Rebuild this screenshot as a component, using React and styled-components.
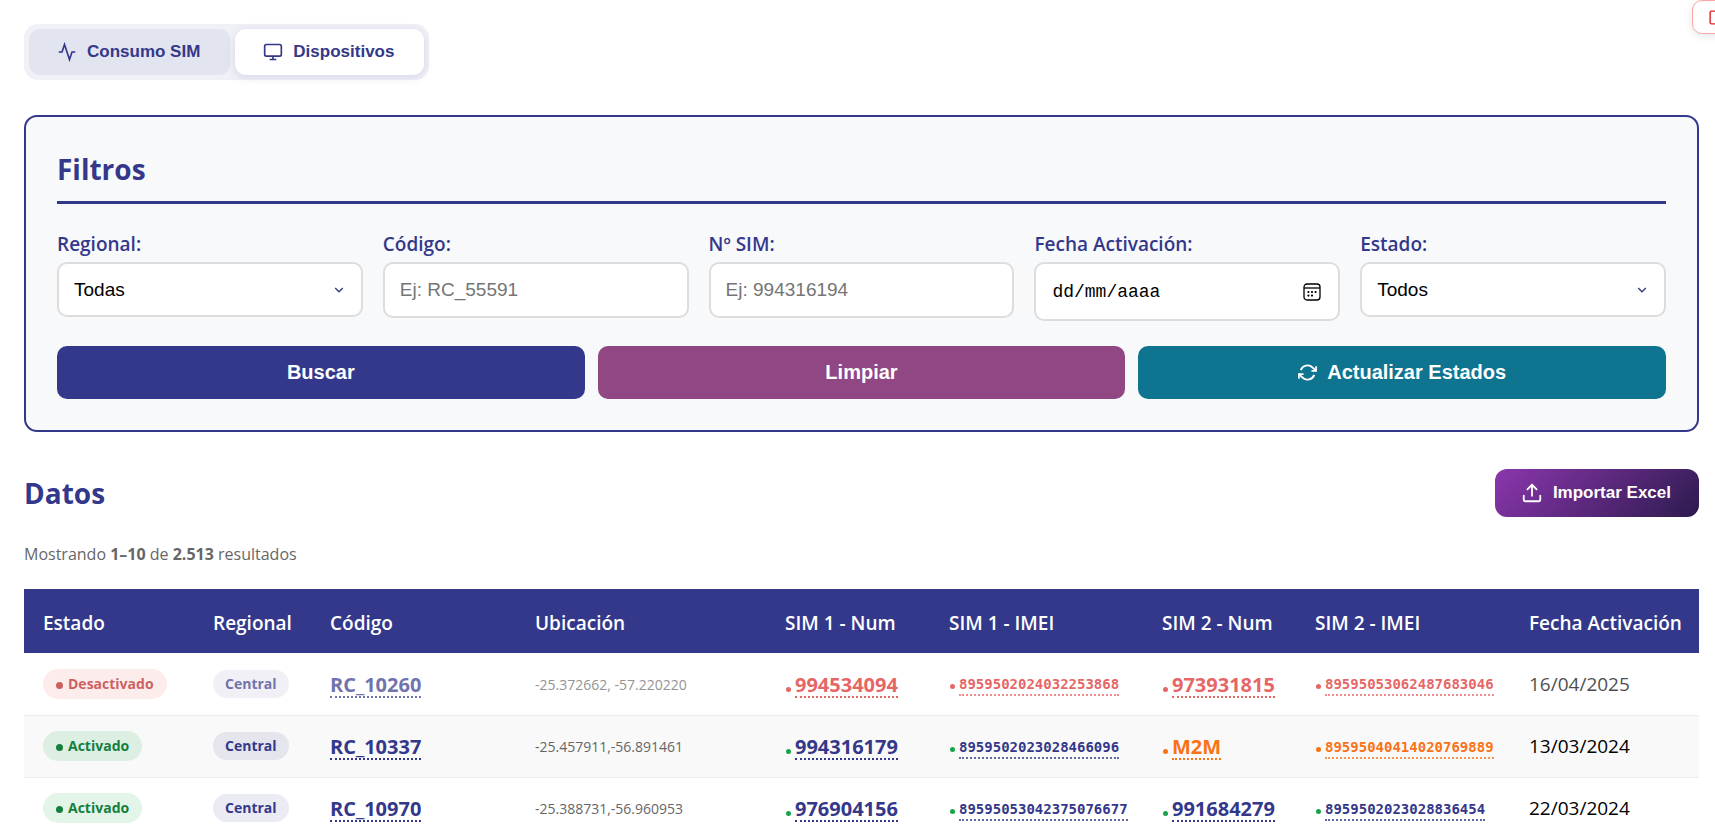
import React, { useState } from 'react'
import styled, { createGlobalStyle } from 'styled-components'
import { Upload } from 'lucide-react'

const GlobalStyle = createGlobalStyle`
  * {
    box-sizing: border-box;
  }

  body {
    margin: 0;
    background: #fff;
    color: #000;
    font-family: 'Open Sans', 'Noto Sans', sans-serif;
    overflow-x: hidden;
  }

  button, input, select {
    font-family: 'Liberation Sans', Arial, sans-serif;
  }
`;

const Page = styled.main`
  padding: 24px 16px 0 24px;
`;

const LogoutButton = styled.button`
  position: fixed;
  top: 0;
  right: -26px;
  display: flex;
  align-items: center;
  height: 34px;
  padding: 0 15px;
  background: #fff;
  border: 1px solid #fca5a5;
  border-radius: 10px;
  color: #dc2626;
  box-shadow: 0 2px 8px rgba(0, 0, 0, 0.1);
  cursor: pointer;
`;

const Tabs = styled.div`
  display: inline-flex;
  gap: 5px;
  padding: 5px;
  background: #f0f1f7;
  border-radius: 14px;
  vertical-align: top;
`;

const Tab = styled.button`
  display: flex;
  align-items: center;
  gap: 10px;
  height: 46px;
  padding: 0 30px 0 28px;
  border: none;
  border-radius: 11px;
  background: ${({ $active }) => ($active ? '#fff' : '#e2e4ef')};
  box-shadow: ${({ $active }) => ($active ? '0 2px 10px rgba(52, 56, 138, 0.15)' : 'none')};
  color: #34388a;
  font-size: 17px;
  font-weight: 700;
  cursor: pointer;
`;

const Panel = styled.section`
  margin-top: 35px;
  padding: 31px;
  background: #f8f9fb;
  border: 2px solid #34388a;
  border-radius: 13px;
`;

const Title = styled.h2`
  margin: 0;
  color: #34388a;
  font-size: 28px;
  font-weight: 700;
  line-height: 42px;
`;

const PanelTitle = styled(Title)`
  margin-bottom: 26px;
  padding-bottom: 11px;
  border-bottom: 3px solid #34388a;
`;

const Fields = styled.div`
  display: grid;
  grid-template-columns: repeat(5, 1fr);
  align-items: start;
  gap: 20px;
`;

const Field = styled.div`
  display: flex;
  flex-direction: column;
  gap: 4px;
`;

const Label = styled.label`
  color: #34388a;
  font-size: 19px;
  font-weight: 600;
  line-height: 28px;
`;

const Control = styled.input`
  width: 100%;
  height: 56px;
  padding: 0 15px;
  background: #fff;
  border: 2px solid #ddd;
  border-radius: 10px;
  color: #000;
  font-size: 19px;

  &::placeholder {
    color: #757575;
    opacity: 1;
  }
`;

const SelectBox = styled.div`
  position: relative;

  svg {
    position: absolute;
    top: 50%;
    right: 19px;
    transform: translateY(-50%);
    pointer-events: none;
  }
`;

const Select = styled(Control)`
  display: block;
  height: 55px;
  appearance: none;
`;

const DateBox = styled.div`
  position: relative;
`;

const DateInput = styled(Control)`
  display: block;
  height: 59px;
  padding: 0 16px;
  font-family: 'Liberation Mono', monospace;
  font-size: 18px;

  &::placeholder {
    color: #000;
  }
`;

const CalendarButton = styled.button`
  position: absolute;
  top: 0;
  right: 19px;
  bottom: 0;
  display: flex;
  align-items: center;
  padding: 0;
  border: none;
  background: none;
  color: #000;
`;

const Actions = styled.div`
  display: grid;
  grid-template-columns: repeat(3, 1fr);
  gap: 13px;
  margin-top: 25px;
`;

const actionColors = {
  search: '#34388a',
  clear: '#914784',
  refresh: '#0e7490',
}

const ActionButton = styled.button`
  display: flex;
  align-items: center;
  justify-content: center;
  gap: 10px;
  height: 53px;
  border: none;
  border-radius: 10px;
  background: ${({ $kind }) => actionColors[$kind]};
  color: #fff;
  font-size: 20px;
  font-weight: 700;
  cursor: pointer;
`;

const DataHeader = styled.header`
  display: flex;
  align-items: center;
  justify-content: space-between;
  margin-top: 37px;
`;

const ImportButton = styled.button`
  display: flex;
  align-items: center;
  gap: 10px;
  height: 48px;
  padding: 0 28px 0 26px;
  border: none;
  border-radius: 12px;
  background: linear-gradient(135deg, #8b36ad 0%, #2d1b4e 100%);
  color: #fff;
  font-size: 17px;
  font-weight: 700;
  cursor: pointer;
`;

const Summary = styled.p`
  margin: 25px 0 22px;
  color: #666;
  font-size: 16px;
  line-height: 25px;
`;

const Table = styled.table`
  width: 100%;
  table-layout: fixed;
  border-collapse: collapse;
`;

const Col = styled.col`
  width: ${({ $width }) => $width}px;
`;

const Th = styled.th`
  height: 64px;
  padding: 4px 0 0 19px;
  background: #34388a;
  color: #fff;
  font-size: 19px;
  font-weight: 600;
  text-align: left;
  white-space: nowrap;
`;

const Row = styled.tr`
  opacity: ${({ $inactive }) => ($inactive ? 0.7 : 1)};

  &:nth-child(even) {
    background: #f9f9f9;
  }
`;

const Td = styled.td`
  height: 62px;
  padding: 0 0 0 19px;
  border-bottom: 1px solid #ececec;
  font-size: 19px;
  line-height: 26px;
  white-space: nowrap;
`;

const Coordinates = styled.span`
  color: #666;
  font-size: 14px;
`;

const Dot = styled.span`
  display: inline-block;
  flex: none;
  width: ${({ $size }) => $size}px;
  height: ${({ $size }) => $size}px;
  border-radius: 50%;
  background: currentColor;
`;

const StatusBadge = styled.span`
  display: inline-flex;
  align-items: baseline;
  gap: 5px;
  height: 30px;
  padding: 0 13px;
  border-radius: 15px;
  background: ${({ $on }) => ($on ? 'rgba(22, 163, 74, 0.12)' : 'rgba(220, 38, 38, 0.12)')};
  color: ${({ $on }) => ($on ? '#15803d' : '#b91c1c')};
  font-size: 14px;
  font-weight: 700;
  line-height: 30px;
  vertical-align: middle;
`;

const RegionBadge = styled.span`
  display: inline-block;
  padding: 0 12px;
  border-radius: 14px;
  background: rgba(52, 56, 138, 0.1);
  color: #34388a;
  font-size: 14px;
  font-weight: 700;
  line-height: 28px;
  vertical-align: middle;
`;

const SimCell = styled.span`
  display: inline-flex;
  align-items: baseline;
  gap: 4px;
  padding-left: 1px;
  color: ${({ $color }) => $color};
`;

const ValueLink = styled.a`
  display: inline-block;
  padding-top: 4px;
  border-bottom: 2px dotted;
  color: ${({ $color }) => $color};
  font-size: 20px;
  font-weight: 700;
  line-height: 22px;
  text-decoration: none;
`;

const ImeiLink = styled(ValueLink)`
  margin-bottom: 2px;
  padding-top: 0;
  border-bottom-color: color-mix(in srgb, currentColor 75%, transparent);
  font-family: 'DejaVu Sans Mono', monospace;
  font-size: 14px;
  line-height: 20px;
`;

const tones = {
  ok: { dot: '#16a34a', text: '#34388a' },
  off: { dot: '#dc2626', text: '#dc2626' },
  m2m: { dot: '#f97316', text: '#f97316' },
}

const columns = [
  { title: 'Estado', width: 170 },
  { title: 'Regional', width: 117 },
  { title: 'Código', width: 205 },
  { title: 'Ubicación', width: 250 },
  { title: 'SIM 1 - Num', width: 164 },
  { title: 'SIM 1 - IMEI', width: 213 },
  { title: 'SIM 2 - Num', width: 153 },
  { title: 'SIM 2 - IMEI', width: 214 },
  { title: 'Fecha Activación', width: 189 },
]

const devices = [
  {
    active: false,
    region: 'Central',
    code: 'RC_10260',
    location: '-25.372662, -57.220220',
    sims: [
      { tone: 'off', num: '994534094', imei: '8959502024032253868' },
      { tone: 'off', num: '973931815', imei: '89595053062487683046' },
    ],
    date: '16/04/2025',
  },
  {
    active: true,
    region: 'Central',
    code: 'RC_10337',
    location: '-25.457911,-56.891461',
    sims: [
      { tone: 'ok', num: '994316179', imei: '8959502023028466096' },
      { tone: 'm2m', num: 'M2M', imei: '89595040414020769889' },
    ],
    date: '13/03/2024',
  },
  {
    active: true,
    region: 'Central',
    code: 'RC_10970',
    location: '-25.388731,-56.960953',
    sims: [
      { tone: 'ok', num: '976904156', imei: '89595053042375076677' },
      { tone: 'ok', num: '991684279', imei: '8959502023028836454' },
    ],
    date: '22/03/2024',
  },
]

const LogoutIcon = () => (
  <svg width="17" height="17" viewBox="0 0 24 24" fill="none" stroke="currentColor" strokeWidth="2" aria-hidden="true">
    <path d="M10 21H5a2 2 0 0 1-2-2V5a2 2 0 0 1 2-2h5" />
    <path d="M16 17l5-5-5-5M21 12H11" />
  </svg>
)

const ActivityIcon = () => (
  <svg width="20" height="20" viewBox="0 0 24 24" fill="none" stroke="currentColor" strokeWidth="2" aria-hidden="true">
    <polyline points="22 12 18 12 15 21 9 3 6 12 2 12" />
  </svg>
)

const MonitorIcon = () => (
  <svg width="20" height="20" viewBox="0 0 24 24" fill="none" stroke="currentColor" strokeWidth="2" aria-hidden="true">
    <rect x="2" y="3" width="20" height="14" rx="2" />
    <path d="M8 21h8M12 17v4" />
  </svg>
)

const ChevronIcon = () => (
  <svg width="10" height="8" viewBox="0 0 10 8" fill="none" stroke="#34388a" strokeWidth="1.3" aria-hidden="true">
    <path d="M1.2 2 5 5.8 8.8 2" />
  </svg>
)

const CalendarIcon = () => (
  <svg width="18" height="18" viewBox="0 0 18 18" fill="none" stroke="currentColor" strokeWidth="1.3" aria-hidden="true">
    <rect x="1" y="1" width="16" height="16" rx="3" />
    <path d="M1 5h16" />
    <g fill="currentColor" stroke="none">
      <circle cx="5.4" cy="9" r="1.1" />
      <circle cx="9" cy="9" r="1.1" />
      <circle cx="12.6" cy="9" r="1.1" />
      <circle cx="5.4" cy="12.6" r="1.1" />
      <circle cx="9" cy="12.6" r="1.1" />
    </g>
  </svg>
)

const RefreshIcon = () => (
  <svg width="19" height="19" viewBox="0 0 24 24" fill="none" stroke="currentColor" strokeWidth="2.4" aria-hidden="true">
    <path d="M23 4v6h-6M1 20v-6h6" />
    <path d="M3.51 9a9 9 0 0 1 14.85-3.36L23 10M1 14l4.64 4.36A9 9 0 0 0 20.49 15" />
  </svg>
)

const SelectField = ({ id, label, option }) => (
  <Field>
    <Label htmlFor={id}>{label}</Label>
    <SelectBox>
      <Select as="select" id={id}>
        <option>{option}</option>
      </Select>
      <ChevronIcon />
    </SelectBox>
  </Field>
)

const TextField = ({ id, label, placeholder }) => (
  <Field>
    <Label htmlFor={id}>{label}</Label>
    <Control id={id} type="text" placeholder={placeholder} />
  </Field>
)

const DeviceRow = ({ device }) => (
  <Row $inactive={!device.active}>
    <Td>
      <StatusBadge $on={device.active}>
        <Dot $size={7} />
        {device.active ? 'Activado' : 'Desactivado'}
      </StatusBadge>
    </Td>
    <Td><RegionBadge>{device.region}</RegionBadge></Td>
    <Td><ValueLink href="#" $color="#34388a">{device.code}</ValueLink></Td>
    <Td><Coordinates>{device.location}</Coordinates></Td>
    {device.sims.map((sim) => (
      <React.Fragment key={sim.imei}>
        <Td>
          <SimCell $color={tones[sim.tone].dot}>
            <Dot $size={5} />
            <ValueLink href="#" $color={tones[sim.tone].text}>{sim.num}</ValueLink>
          </SimCell>
        </Td>
        <Td>
          <SimCell $color={tones[sim.tone].dot}>
            <Dot $size={5} />
            <ImeiLink href="#" $color={tones[sim.tone].text}>{sim.imei}</ImeiLink>
          </SimCell>
        </Td>
      </React.Fragment>
    ))}
    <Td>{device.date}</Td>
  </Row>
)

const App = () => {
  const [tab, setTab] = useState('dispositivos')

  return (
    <>
      <GlobalStyle />
      <LogoutButton aria-label="Salir">
        <LogoutIcon />
      </LogoutButton>
      <Page>
        <Tabs>
          <Tab $active={tab === 'consumo'} onClick={() => setTab('consumo')}>
            <ActivityIcon />
            Consumo SIM
          </Tab>
          <Tab $active={tab === 'dispositivos'} onClick={() => setTab('dispositivos')}>
            <MonitorIcon />
            Dispositivos
          </Tab>
        </Tabs>

        <Panel>
          <PanelTitle>Filtros</PanelTitle>
          <Fields>
            <SelectField id="regional" label="Regional:" option="Todas" />
            <TextField id="codigo" label="Código:" placeholder="Ej: RC_55591" />
            <TextField id="sim" label="Nº SIM:" placeholder="Ej: 994316194" />
            <Field>
              <Label htmlFor="fecha">Fecha Activación:</Label>
              <DateBox>
                <DateInput id="fecha" type="text" placeholder="dd/mm/aaaa" />
                <CalendarButton type="button" aria-label="Elegir fecha">
                  <CalendarIcon />
                </CalendarButton>
              </DateBox>
            </Field>
            <SelectField id="estado" label="Estado:" option="Todos" />
          </Fields>
          <Actions>
            <ActionButton $kind="search">Buscar</ActionButton>
            <ActionButton $kind="clear">Limpiar</ActionButton>
            <ActionButton $kind="refresh">
              <RefreshIcon />
              Actualizar Estados
            </ActionButton>
          </Actions>
        </Panel>

        <DataHeader>
          <Title>Datos</Title>
          <ImportButton>
            <Upload size={22} />
            Importar Excel
          </ImportButton>
        </DataHeader>
        <Summary>
          Mostrando <strong>1–10</strong> de <strong>2.513</strong> resultados
        </Summary>

        <Table>
          <colgroup>
            {columns.map((column) => (
              <Col key={column.title} $width={column.width} />
            ))}
          </colgroup>
          <thead>
            <tr>
              {columns.map((column) => (
                <Th key={column.title} scope="col">{column.title}</Th>
              ))}
            </tr>
          </thead>
          <tbody>
            {devices.map((device) => (
              <DeviceRow key={device.code} device={device} />
            ))}
          </tbody>
        </Table>
      </Page>
    </>
  )
}

export default App
